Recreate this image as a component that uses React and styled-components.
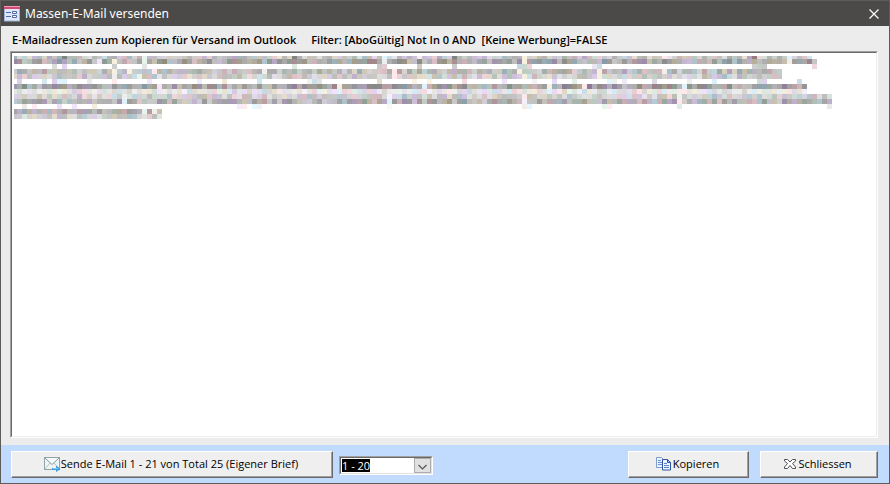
import React from "react";
import styled, { createGlobalStyle } from "styled-components";

const Global = createGlobalStyle`
  * { box-sizing: border-box; }
  html, body { margin: 0; }
  body, button, select, textarea { font-family: "Open Sans", "Noto Sans", sans-serif; }
`;

const Window = styled.div`
  min-height: 100vh;
  display: flex;
  flex-direction: column;
  border: 1px solid #5d5c5a;
  background: #ececec;
  color: #000;
  font-size: 11px;
`;

const TitleBar = styled.header`
  height: 25px;
  display: flex;
  align-items: center;
  gap: 5px;
  padding: 0 9px 0 3px;
  background: #4b4a48;
`;

const Title = styled.h1`
  flex: 1;
  margin: 0;
  font-family: "Noto Sans", "Open Sans", sans-serif;
  font-size: 12px;
  line-height: 16px;
  font-weight: 400;
  color: #fff;
`;

const CloseButton = styled.button`
  display: flex;
  padding: 0;
  border: 0;
  background: none;
  color: #fff;
`;

const Content = styled.main`
  flex: 1;
  display: flex;
  flex-direction: column;
  padding: 6px 11px 7px 9px;
`;

const Caption = styled.label`
  display: flex;
  gap: 15px;
  padding: 0 2px 3px;
  font-size: 11px;
  line-height: 16px;
  font-weight: 600;
  white-space: pre;
`;

const AddressBox = styled.div`
  flex: 1;
  display: flex;
  position: relative;
  border: 1px solid;
  border-color: #a0a0a0 #fff #fff #a0a0a0;
`;

const Addresses = styled.textarea`
  flex: 1;
  min-height: 120px;
  resize: none;
  outline: 0;
  padding: 4px 2px;
  border: 1px solid;
  border-color: #696969 #ececec #ececec #696969;
  background: #fff;
  font-size: 11px;
  line-height: 13px;
`;

const Mosaic = styled.svg`
  position: absolute;
  left: 3px;
  top: 4px;
  pointer-events: none;
`;

const Footer = styled.footer`
  display: flex;
  align-items: flex-start;
  padding: 6px 11px 5px 10px;
  background: #c1dbff;
`;

const Button = styled.button`
  width: ${(p) => p.$width}px;
  height: 27px;
  display: flex;
  align-items: center;
  justify-content: center;
  gap: ${(p) => p.$gap || 0}px;
  padding: 0 2px 2px 0;
  border: 1px solid;
  border-color: #fff #696969 #696969 #fff;
  box-shadow: inset -1px -1px #a0a0a0;
  background: #efefef;
  color: #000;
  font-size: 11px;
  line-height: 16px;
  white-space: nowrap;
`;

const Actions = styled.div`
  display: flex;
  gap: 11px;
  margin-left: auto;
`;

const Combo = styled.div`
  position: relative;
  width: 94px;
  height: 19px;
  margin: 5px 0 0 6px;
  border: 1px solid;
  border-color: #a0a0a0 #fff #fff #a0a0a0;
`;

const Range = styled.select`
  appearance: none;
  display: block;
  width: 100%;
  height: 17px;
  padding: 0 0 0 1px;
  outline: 0;
  border: 1px solid;
  border-color: #696969 #e3e3e3 #e3e3e3 #696969;
  border-radius: 0;
  background: linear-gradient(#000, #000) 1px 1px / 28px 13px no-repeat #fff;
  color: #fff;
  font-size: 11px;
  line-height: 15px;

  option { color: #000; background: #fff; }
`;

const Arrow = styled.svg`
  position: absolute;
  right: 1px;
  top: 1px;
  pointer-events: none;
`;

function FormIcon() {
  return (
    <svg width="16" height="16" viewBox="0 0 16 16" aria-hidden="true">
      <rect x="0.5" y="1" width="15" height="14" fill="#dfe8f8" stroke="#9db2dc" />
      <rect x="0" y="0" width="16" height="3" fill="#d34b75" />
      <rect x="0" y="0" width="16" height="1" fill="#ef9db5" />
      <path d="M2 6.500h5M2 10.500h5" stroke="#5368a3" />
      <path d="M8.500 5.500h4v2h-4zM8.500 9.500h4v2h-4z" fill="#fff" stroke="#5368a3" />
    </svg>
  );
}

function MailIcon() {
  return (
    <svg width="17" height="16" viewBox="0 0 17 16" aria-hidden="true">
      <rect x="0.5" y="1.500" width="15" height="12" fill="#edf4f3" stroke="#91a5a8" />
      <path d="M1 13l5-6M15 13l-5-6" stroke="#b7c6c8" fill="none" />
      <path d="M1 2l7 6.500L15 2" stroke="#8499a0" fill="#f8fbfb" />
      <path d="M8 12h4v-2.500l4.500 3.500-4.500 3v-2H8z" fill="#3e9bdd" />
      <path d="M9 12.500h5" stroke="#8bcbf5" fill="none" />
    </svg>
  );
}

function CopyIcon() {
  return (
    <svg width="16" height="15" viewBox="0 0 16 15" aria-hidden="true">
      <path d="M.5 1.500h5l3 3v7h-8z" fill="#eaf2ff" stroke="#7d9ccf" />
      <path d="M2 4.500h3M2 6.500h5M2 8.500h5" stroke="#6d91cf" />
      <path d="M6.500 3.500h5l3 3v7.500h-8z" fill="#eef5ff" stroke="#2f55a0" />
      <path d="M11.500 3.500v3h3z" fill="#b8cdf0" stroke="#2f55a0" />
      <path d="M8 7.500h3M8 9.500h5M8 11.500h5" stroke="#5a83cb" />
    </svg>
  );
}

function CrossIcon() {
  return (
    <svg width="12" height="10" viewBox="0 0 12 10" aria-hidden="true">
      <path
        d="M.5 .5h3L6 3 8.500 .5h3v1.500L8.500 4.500 11.500 8v1.500h-3L6 6.500 3.500 9.500h-3V8l3-3.500-3-2.500z"
        fill="#fff"
        stroke="#4c5255"
      />
    </svg>
  );
}

const CELL = 5;
const span = (a, b) => Array.from({ length: b - a }, (_, i) => a + i);
const TINTS = [
  [0, 0, 0], [4, -10, 16], [20, -6, -2], [-16, 4, 14], [10, 2, -16],
  [-8, 6, -2], [6, 2, 14], [4, 0, -4], [0, 3, 1],
];

/* tone: mean lightness, vary: spread, end: cell count, pale: gaps, only: lone descenders */
const BANDS = [
  { tone: 200, vary: 26, end: 160, pale: [26, 74, 81, 102, 130, 155], dark: [10, 56, 88, 148] },
  { tone: 168, vary: 30, end: 161, pale: [17, 20, 26, 74, 102, 155] },
  { tone: 214, vary: 18, only: [8, 10, 20, 26, 56, 73, 74, 81, 88, 101, 102, 103, 116, 117, 148, 149, 150, 160] },
  { tone: 188, vary: 24, end: 154, pale: [20, 23, 28, 50, 76, 101, 117, 130] },
  { tone: 203, vary: 20, end: 154, pale: [20, 25, 76, 102, 117] },
  { tone: 228, vary: 14, only: [1, 6, 8, 9, 10, 15, 20, 27, 37, 42, 49, 59, 60, 61, 73, 80, 83, 90, 98, 104, 108, 112, 119, 120, 122, 128, 135, 140, 149, 150, 157] },
  { tone: 162, vary: 28, end: 159, pale: [29, 65, 82, 107, 114, 134] },
  { tone: 225, vary: 14, end: 159, pale: [29, 65, 107, 134] },
  { tone: 205, vary: 20, end: 164, pale: [22, 75, 102, 133] },
  { tone: 178, vary: 26, end: 164, pale: [22, 75, 102, 133] },
  { tone: 238, vary: 8, only: [2, 4, 9, 12, 16, 45, 46, 48, 49, 75, 102, 103, 118, 119, 133, 163] },
  { tone: 174, vary: 20, end: 30, pale: [26, 28] },
  { tone: 208, vary: 20, end: 30, pale: [] },
];

function buildCells() {
  let state = 20251;
  const next = () => {
    state = (state + 0x6d2b79f5) | 0;
    let t = Math.imul(state ^ (state >>> 15), 1 | state);
    t = (t + Math.imul(t ^ (t >>> 7), 61 | t)) ^ t;
    return ((t ^ (t >>> 14)) >>> 0) / 4294967296;
  };
  const cells = [];
  BANDS.forEach((band, row) => {
    (band.only || span(0, band.end)).forEach((col) => {
      const pale = band.pale && band.pale.includes(col);
      const dark = band.dark && band.dark.includes(col);
      const level = dark ? 130 : pale ? 238 : band.tone + (next() * 2 - 1) * band.vary;
      const tint = TINTS[Math.floor(next() * TINTS.length)];
      const rgb = tint.map((t) => Math.min(255, Math.round(level + t)));
      cells.push({ row, col, fill: `rgb(${rgb.join(",")})` });
    });
  });
  return cells;
}

const CELLS = buildCells();

function RedactedText() {
  return (
    <Mosaic width="820" height="63" viewBox="2 2 820 63" shapeRendering="crispEdges" aria-hidden="true">
      {CELLS.map(({ row, col, fill }) => (
        <rect key={`${row}-${col}`} x={col * CELL} y={row * CELL} width={CELL} height={CELL} fill={fill} />
      ))}
    </Mosaic>
  );
}

export default function App() {
  return (
    <>
      <Global />
      <Window>
        <TitleBar>
          <FormIcon />
          <Title>Massen-E-Mail versenden</Title>
          <CloseButton type="button" aria-label="Fenster schliessen">
            <svg width="12" height="12" viewBox="0 0 12 12" aria-hidden="true">
              <path d="M1.500 1.500l9 9M10.500 1.500l-9 9" stroke="currentColor" strokeWidth="1.200" />
            </svg>
          </CloseButton>
        </TitleBar>
        <Content>
          <Caption htmlFor="addresses">
            <span>E-Mailadressen zum Kopieren für Versand im Outlook</span>
            <span>{"Filter: [AboGültig] Not In 0 AND  [Keine Werbung]=FALSE"}</span>
          </Caption>
          <AddressBox>
            <Addresses id="addresses" />
            <RedactedText />
          </AddressBox>
        </Content>
        <Footer>
          <Button type="button" $width={322}>
            <MailIcon />
            Sende E-Mail 1 - 21 von Total 25 (Eigener Brief)
          </Button>
          <Combo>
            <Range aria-label="Bereich" defaultValue="1 - 20">
              <option>1 - 20</option>
              <option>21 - 25</option>
            </Range>
            <Arrow width="17" height="15" viewBox="0 0 17 15" aria-hidden="true">
              <rect x="0.5" y="0.5" width="16" height="14" fill="#e1e1e1" stroke="#acacac" />
              <path d="M4.500 7l4 4 4-4" fill="none" stroke="#555" strokeWidth="1.200" />
            </Arrow>
          </Combo>
          <Actions>
            <Button type="button" $width={121} $gap={1}>
              <CopyIcon />
              Kopieren
            </Button>
            <Button type="button" $width={118} $gap={2}>
              <CrossIcon />
              Schliessen
            </Button>
          </Actions>
        </Footer>
      </Window>
    </>
  );
}
